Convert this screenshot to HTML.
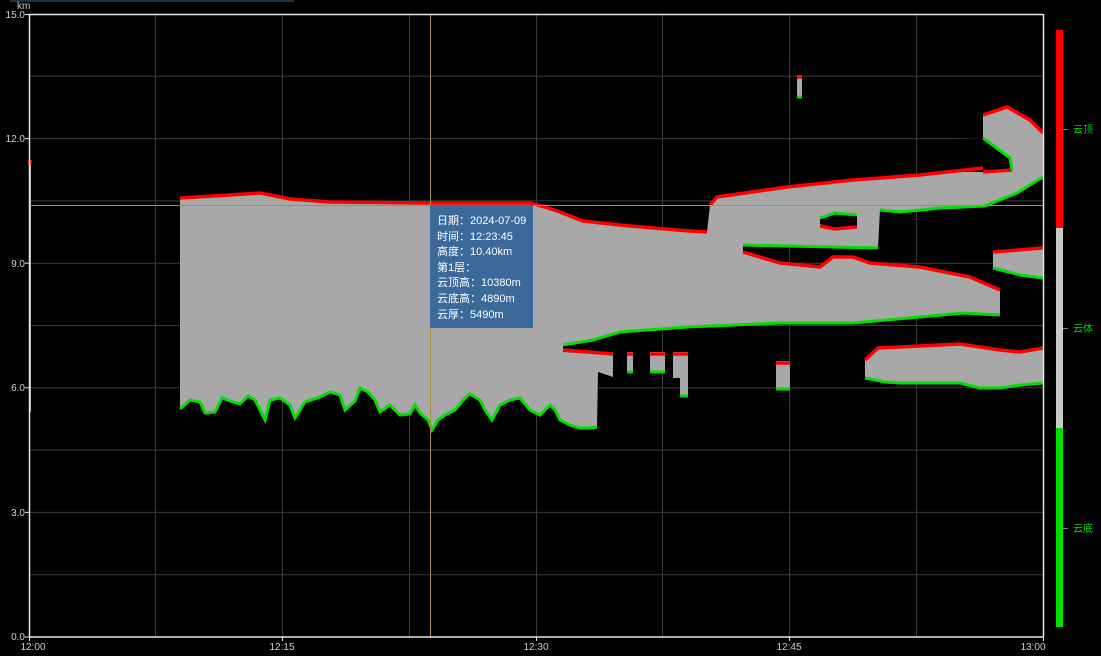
<!DOCTYPE html>
<html><head><meta charset="utf-8"><style>
html,body{margin:0;padding:0;background:#000;width:1101px;height:656px;overflow:hidden}
svg{display:block}
text{font-family:"Liberation Sans","Noto Sans CJK SC",sans-serif}
.ax{fill:#d0d0d0;font-size:10px}
.tip{fill:#fff;font-size:11px}
</style></head><body>
<svg width="1101" height="656" viewBox="0 0 1101 656">
<rect width="1101" height="656" fill="#000"/>
<rect x="10" y="0" width="284" height="2" fill="#1a3050"/>
<g stroke="#3a3a3a" stroke-width="1">
<line x1="29" y1="76.3" x2="1043" y2="76.3"/><line x1="29" y1="138.6" x2="1043" y2="138.6"/>
<line x1="29" y1="200.9" x2="1043" y2="200.9"/><line x1="29" y1="263.2" x2="1043" y2="263.2"/>
<line x1="29" y1="325.5" x2="1043" y2="325.5"/><line x1="29" y1="387.8" x2="1043" y2="387.8"/>
<line x1="29" y1="450.1" x2="1043" y2="450.1"/><line x1="29" y1="512.4" x2="1043" y2="512.4"/>
<line x1="29" y1="574.7" x2="1043" y2="574.7"/>
<line x1="155.5" y1="14" x2="155.5" y2="637"/><line x1="282.5" y1="14" x2="282.5" y2="637"/>
<line x1="409.5" y1="14" x2="409.5" y2="637"/><line x1="536.5" y1="14" x2="536.5" y2="637"/>
<line x1="662.5" y1="14" x2="662.5" y2="637"/><line x1="789.5" y1="14" x2="789.5" y2="637"/>
<line x1="916.5" y1="14" x2="916.5" y2="637"/>
</g>
<polygon fill="#a8a8a8" points="180,198 230,195 260,193 290,199 330,202 430,203 530,203 545,207 560,212 583,221 620,225 653,228 690,231 707,232 710,205 717,197 787,187 853,180 920,175 983,168 983,115 1007,107 1030,120 1043,133 1043,177 1017,193 985,206 940,208 900,212 880,210 878,248 743,245 743,252 780,263 820,267 833,257 853,257 870,263 920,267 970,277 1000,290 1000,315 963,313 853,323 780,323 687,327 620,332 593,340 563,345 563,352 613,355 613,377 598,372 597,427 590,428 580,428 570,425 560,420 555,410 550,405 540,415 530,410 520,398 510,400 500,405 492,420 485,410 480,400 470,394 465,398 455,410 445,415 438,420 432,430 428,420 420,413 415,405 410,414 400,415 390,405 380,412 375,400 368,392 360,388 355,401 345,410 340,395 330,392 320,397 305,402 300,410 295,418 290,405 280,398 270,400 265,420 260,410 255,400 248,396 240,404 233,402 222,398 215,412 205,413 200,402 190,400 180,409"/>
<polygon fill="#000" points="983,138 1010,158 1012,170 983,172 940,172 940,140"/>
<polygon fill="#000" points="820,218 835,213 857,215 857,227 835,229 820,224"/>
<g fill="none" stroke="#ff0000" stroke-width="3.5">
<polyline points="180,198 230,195 260,193 290,199 330,202 430,203 530,203 545,207 560,212 583,221 620,225 653,228 690,231 707,232"/>
<polyline points="710,205 717,197 787,187 853,180 920,175 983,168"/>
<polyline points="983,115 1007,107 1030,120 1043,133"/>
<polyline points="743,252 780,263 820,267 833,257 853,257 870,263 920,267 970,277 1000,290"/>
<polyline points="563,350 613,354"/>
<polyline points="820,226 835,229 857,227"/>
<polyline points="983,172 1012,170"/>
</g>
<g fill="none" stroke="#00e000" stroke-width="3">
<polyline points="180,409 190,400 200,402 205,413 215,412 222,398 233,402 240,404 248,396 255,400 260,410 265,420 270,400 280,398 290,405 295,418 300,410 305,402 320,397 330,392 340,395 345,410 355,401 360,388 368,392 375,400 380,412 390,405 400,415 410,414 415,405 420,413 428,420 432,430 438,420 445,415 455,410 465,398 470,394 480,400 485,410 492,420 500,405 510,400 520,398 530,410 540,415 550,405 555,410 560,420 570,425 580,428 590,428 597,427"/>
<polyline points="563,345 593,340 620,332 687,327 780,323 853,323 963,313 1000,315"/>
<polyline points="743,245 878,248"/>
<polyline points="1043,177 1017,193 985,206 940,208 900,212 880,210"/>
<polyline points="983,138 1010,158 1012,170"/>
<polyline points="820,218 835,213 857,215"/>
</g>
<g fill="#a8a8a8">
<rect x="627" y="352" width="6" height="21"/><rect x="650" y="352" width="15" height="21"/>
<rect x="673" y="352" width="15" height="26"/><rect x="680" y="370" width="8" height="27"/>
<rect x="776" y="361" width="14" height="29"/>
<polygon points="865,360 878,348 920,346 960,344 1000,350 1020,352 1043,348 1043,383 1020,385 1000,388 980,388 960,383 920,383 900,383 885,382 875,380 865,378"/>
<polygon points="993,252 1043,248 1043,278 1020,275 993,268"/>
<rect x="797" y="75" width="5" height="23"/>
<rect x="29" y="160" width="2" height="252"/>
</g>
<g fill="none" stroke="#ff0000" stroke-width="3.5">
<line x1="627" y1="354" x2="633" y2="354"/><line x1="650" y1="354" x2="665" y2="354"/>
<line x1="673" y1="354" x2="688" y2="354"/><line x1="776" y1="363" x2="790" y2="363"/>
<polyline points="865,360 878,348 920,346 960,344 1000,350 1020,352 1043,348"/>
<polyline points="993,252 1043,248"/>
<line x1="797" y1="77" x2="802" y2="77"/><line x1="30" y1="160" x2="30" y2="165"/>
</g>
<g fill="none" stroke="#00e000" stroke-width="3">
<line x1="627" y1="372" x2="633" y2="372"/><line x1="650" y1="372" x2="665" y2="372"/>
<line x1="680" y1="396" x2="688" y2="396"/><line x1="776" y1="389" x2="790" y2="389"/>
<polyline points="1043,383 1020,385 1000,388 980,388 960,383 920,383 900,383 885,382 875,380 865,378"/>
<polyline points="1043,278 1020,275 993,268"/>
<line x1="797" y1="97" x2="802" y2="97"/>
</g>
<line x1="29" y1="205.5" x2="1043" y2="205.5" stroke="#a88f3a" stroke-width="1"/>
<line x1="430.5" y1="14" x2="430.5" y2="637" stroke="#a88f3a" stroke-width="1"/>
<g stroke="#e8e8e8" stroke-width="1.5">
<line x1="29" y1="14.5" x2="1043" y2="14.5"/><line x1="29.5" y1="14" x2="29.5" y2="637"/>
<line x1="1043.5" y1="14" x2="1043.5" y2="637"/><line x1="29" y1="637" x2="1043" y2="637"/>
</g>
<g stroke="#e8e8e8" stroke-width="1">
<line x1="25" y1="14.5" x2="29" y2="14.5"/><line x1="25" y1="138.6" x2="29" y2="138.6"/>
<line x1="25" y1="263.2" x2="29" y2="263.2"/><line x1="25" y1="387.8" x2="29" y2="387.8"/>
<line x1="25" y1="512.4" x2="29" y2="512.4"/><line x1="25" y1="637" x2="29" y2="637"/>
<line x1="29.5" y1="637" x2="29.5" y2="641"/><line x1="282.5" y1="637" x2="282.5" y2="641"/>
<line x1="536.5" y1="637" x2="536.5" y2="641"/><line x1="789.5" y1="637" x2="789.5" y2="641"/>
<line x1="1043.5" y1="637" x2="1043.5" y2="641"/>
</g>
<text class="ax" x="17" y="9" font-size="9">km</text>
<g class="ax" text-anchor="end">
<text x="25" y="18">15.0</text><text x="25" y="142">12.0</text><text x="25" y="267">9.0</text>
<text x="25" y="391">6.0</text><text x="25" y="516">3.0</text><text x="25" y="640">0.0</text>
</g>
<g class="ax" text-anchor="middle">
<text x="33" y="650">12:00</text><text x="282" y="650">12:15</text><text x="536" y="650">12:30</text>
<text x="789" y="650">12:45</text><text x="1033" y="650">13:00</text>
</g>
<rect x="430" y="205" width="103" height="123" fill="#3b6a9a"/>
<g class="tip">
<text x="437" y="224">日期：2024-07-09</text>
<text x="437" y="240">时间：12:23:45</text>
<text x="437" y="255">高度：10.40km</text>
<text x="437" y="271">第1层：</text>
<text x="437" y="286">云顶高：10380m</text>
<text x="437" y="302">云底高：4890m</text>
<text x="437" y="318">云厚：5490m</text>
</g>
<rect x="1056" y="30" width="7" height="198" fill="#ff0000"/>
<rect x="1056" y="228" width="7" height="200" fill="#c8c8c8"/>
<rect x="1056" y="428" width="7" height="199" fill="#00e000"/>
<g stroke="#888"><line x1="1063" y1="129.5" x2="1068" y2="129.5"/><line x1="1063" y1="328.5" x2="1068" y2="328.5"/><line x1="1063" y1="528.5" x2="1068" y2="528.5"/></g>
<g fill="#00dd00" font-size="10">
<text x="1073" y="133">云顶</text><text x="1073" y="332">云体</text><text x="1073" y="532">云底</text>
</g>
</svg>
</body></html>
